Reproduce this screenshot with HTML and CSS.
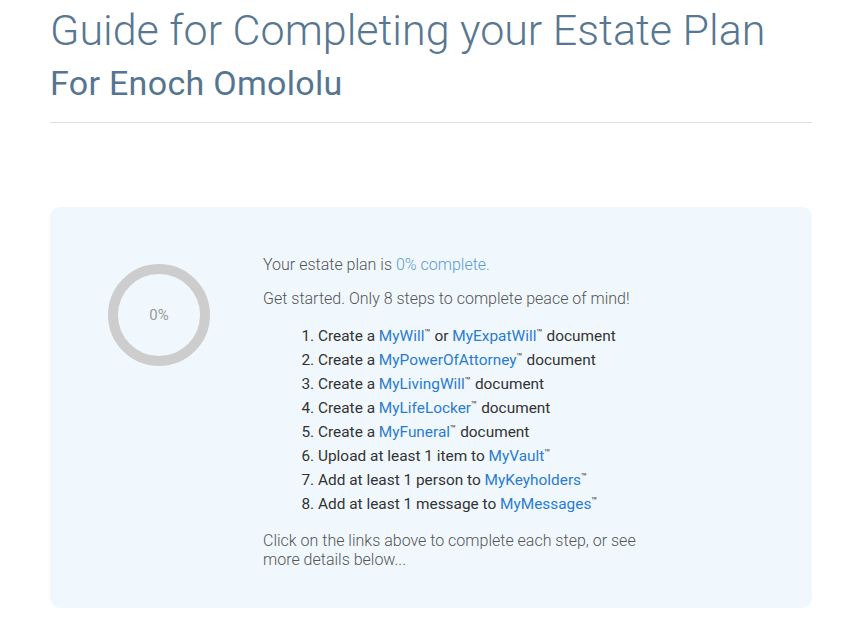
FILE: index.html
```html
<!DOCTYPE html>
<html>
<head>
<meta charset="utf-8">
<link rel="stylesheet" href="styles.css">
</head>
<body>
<div class="page">
  <header class="head">
    <h1 class="title">Guide for Completing your Estate Plan</h1>
    <h2 class="subtitle">For Enoch Omololu</h2>
  </header>
  <section class="card">
    <div class="ring-col">
      <div class="ring"><span class="ring-label">0%</span></div>
    </div>
    <div class="content">
      <p class="lead">Your estate plan is <span class="pct">0% complete.</span></p>
      <p class="lead lead-last">Get started. Only 8 steps to complete peace of mind!</p>
      <ol class="steps">
        <li>Create a <a href="#">MyWill</a><sup>™</sup> or <a href="#">MyExpatWill</a><sup>™</sup> document</li>
        <li>Create a <a href="#">MyPowerOfAttorney</a><sup>™</sup> document</li>
        <li>Create a <a href="#">MyLivingWill</a><sup>™</sup> document</li>
        <li>Create a <a href="#">MyLifeLocker</a><sup>™</sup> document</li>
        <li>Create a <a href="#">MyFuneral</a><sup>™</sup> document</li>
        <li>Upload at least 1 item to <a href="#">MyVault</a><sup>™</sup></li>
        <li>Add at least 1 person to <a href="#">MyKeyholders</a><sup>™</sup></li>
        <li>Add at least 1 message to <a href="#">MyMessages</a><sup>™</sup></li>
      </ol>
      <p class="foot">Click on the links above to complete each step, or see more details below...</p>
    </div>
  </section>
</div>
</body>
</html>
```
FILE: styles.css
```css
* { box-sizing: border-box; }
html, body { margin: 0; padding: 0; background: #fff; }
body { font-family: Roboto, "Noto Sans", Arial, sans-serif; }
.page { width: 762px; margin-left: 50px; }
.head { border-bottom: 1px solid #dedede; padding-bottom: 20px; }
.title {
  margin: 0; padding-top: 4px;
  font-size: 43px; font-weight: 300; line-height: 52px;
  color: #587792; letter-spacing: 0;
}
.subtitle {
  margin: 0; margin-top: 8px;
  font-size: 34px; font-weight: 400; line-height: 38px;
  color: #557591; letter-spacing: 0.3px;
}
.card {
  margin-top: 84px;
  background: #f0f8fd;
  border-radius: 10px;
  height: 401px;
  display: flex;
  padding: 48px 0 0 0;
}
.ring-col { width: 213px; flex: none; padding-top: 9px; padding-left: 58px; }
.ring {
  width: 102px; height: 102px; border-radius: 50%;
  border: 10px solid #cdcdcd;
  display: flex; align-items: center; justify-content: center;
}
.ring-label { font-size: 15px; color: #9a9a9a; font-weight: 400; }
.content { font-size: 16px; color: #555; font-weight: 300; width: 390px; }
.lead { margin: 0 0 15px 0; line-height: 19px; }
.lead-last { margin-bottom: 16px; }
.pct { color: #5a9ad6; }
.steps { margin: 0 0 15px 0; padding-left: 55px; font-size: 15.4px; font-weight: 400; color: #333; line-height: 24px; }
.steps a { color: #2a7ccf; text-decoration: none; }
.steps sup { font-size: 10px; vertical-align: 5px; line-height: 0; }
.foot { margin: 0; line-height: 19px; }
```
